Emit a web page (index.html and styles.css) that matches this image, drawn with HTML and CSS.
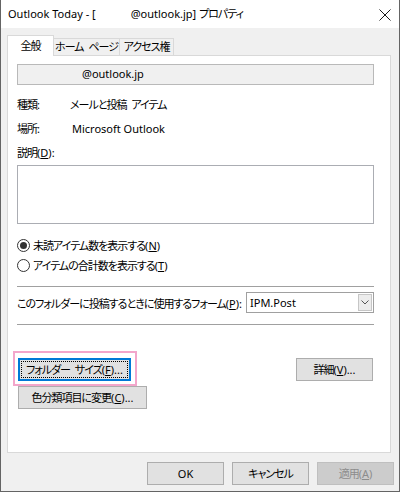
FILE: index.html
```html
<!DOCTYPE html>
<html lang="ja">
<head>
<meta charset="utf-8">
<title>Outlook Today プロパティ</title>
<link rel="stylesheet" href="styles.css">
</head>
<body>
<div class="window">
  <div class="titlebar">
    <span class="title">Outlook Today - [<span class="title-gap"></span>@outlook.jp] <span class="ja">プロパティ</span></span>
    <svg class="close" width="12" height="12" viewBox="0 0 12 12"><path d="M0.5 0.5 L11.5 11.5 M11.5 0.5 L0.5 11.5" stroke="#1a1a1a" stroke-width="1" fill="none"/></svg>
  </div>
  <div class="client">
    <div class="tabs">
      <div class="tab tab-general active"><span class="ja">全般</span></div>
      <div class="tab tab-home"><span class="ja">ホーム ページ</span></div>
      <div class="tab tab-access"><span class="ja">アクセス権</span></div>
    </div>
    <div class="panel">
      <div class="namebox">@outlook.jp</div>
      <div class="info-row"><span class="info-label ja">種類:</span><span class="ja">メールと投稿 アイテム</span></div>
      <div class="info-row"><span class="info-label ja">場所:</span><span class="info-value">Microsoft Outlook</span></div>
      <div class="info-row"><span class="ja">説明</span><span class="acc">(<u>D</u>):</span></div>
      <div class="textarea"></div>
      <div class="radio-row first"><span class="radio checked"></span><span><span class="ja">未読アイテム数を表示する</span><span class="acc">(<u>N</u>)</span></span></div>
      <div class="radio-row"><span class="radio"></span><span><span class="ja">アイテムの合計数を表示する</span><span class="acc">(<u>T</u>)</span></span></div>
      <div class="sep sep-top"></div>
      <div class="form-row">
        <span class="form-label"><span class="ja">このフォルダーに投稿するときに使用するフォーム</span><span class="acc">(<u>P</u>):</span></span>
        <div class="combo">
          <span class="combo-text">IPM.Post</span>
          <span class="combo-btn"><svg width="8" height="5" viewBox="0 0 8 5"><path d="M0.5 0.5 L4 4 L7.5 0.5" stroke="#555" stroke-width="1" fill="none"/></svg></span>
        </div>
      </div>
      <div class="sep sep-bottom"></div>
      <div class="btn-row">
        <div class="highlight-wrap">
          <button class="btn btn-default btn-size"><span class="focus"><span class="ja">フォルダー サイズ</span><span class="acc">(<u>F</u>)...</span></span></button>
        </div>
        <button class="btn btn-detail"><span class="ja">詳細</span><span class="acc">(<u>V</u>)...</span></button>
      </div>
      <button class="btn btn-category"><span class="ja">色分類項目に変更</span><span class="acc">(<u>C</u>)...</span></button>
    </div>
    <div class="footer">
      <button class="btn btn-footer">OK</button>
      <button class="btn btn-footer"><span class="ja">キャンセル</span></button>
      <button class="btn btn-footer disabled"><span class="ja">適用</span><span class="acc">(<u>A</u>)</span></button>
    </div>
  </div>
</div>
</body>
</html>
```

FILE: styles.css
```css
* { box-sizing: border-box; }

html, body {
  margin: 0;
  padding: 0;
  background: #ffffff;
}

body {
  font-family: "Segoe UI", "Noto Sans", "Noto Sans CJK JP", sans-serif;
  font-size: 11px;
  color: #000000;
  font-feature-settings: "palt";
}

.ja {
  letter-spacing: -1px;
  word-spacing: 3px;
}

.acc {
  letter-spacing: 0;
}

u { text-decoration: underline; text-underline-offset: 1px; }

.window {
  width: 400px;
  height: 492px;
  border: 1px solid #646464;
  border-top: none;
  background: #f0f0f0;
  display: flex;
  flex-direction: column;
}

.titlebar {
  height: 28px;
  background: #ffffff;
  display: flex;
  align-items: center;
  justify-content: space-between;
  padding: 0 8px 0 7px;
}

.title {
  line-height: 16px;
  white-space: nowrap;
}

.title-gap {
  display: inline-block;
  width: 35px;
}

.close {
  display: block;
  margin-top: 1px;
}

.client {
  padding: 7px 0 0 6px;
  display: flex;
  flex-direction: column;
}

.tabs {
  display: flex;
  align-items: flex-end;
  height: 20px;
  position: relative;
  z-index: 1;
}

.tab {
  height: 17px;
  border: 1px solid #d9d9d9;
  border-bottom: none;
  border-left: none;
  background: #f0f0f0;
  text-align: center;
  line-height: 16px;
  white-space: nowrap;
}

.tab.active {
  height: 21px;
  margin-bottom: -1px;
  background: #ffffff;
  border-left: 1px solid #d9d9d9;
  line-height: 20px;
  padding-bottom: 2px;
}

.tab-general { width: 47px; }
.tab-home { width: 66px; }
.tab-access { width: 54px; }

.panel {
  width: 384px;
  height: 398px;
  background: #ffffff;
  border: 1px solid #d9d9d9;
  padding: 8px 16px 0 9px;
  display: flex;
  flex-direction: column;
}

.namebox {
  height: 21px;
  background: #f0f0f0;
  border: 1px solid #b9b9b9;
  padding-left: 64px;
  line-height: 18px;
}

.info-row {
  height: 24px;
  line-height: 24px;
  display: flex;
  white-space: nowrap;
}

.namebox + .info-row { margin-top: 8px; }

.info-label {
  width: 53px;
}

.info-value {
  padding-left: 2px;
}

.textarea {
  height: 59px;
  border: 1px solid #abadb3;
  background: #ffffff;
}

.radio-row {
  height: 20px;
  display: flex;
  align-items: center;
  gap: 3px;
  white-space: nowrap;
}

.radio-row.first { margin-top: 11px; }

.radio {
  width: 13px;
  height: 13px;
  border: 1px solid #333333;
  border-radius: 50%;
  background: #ffffff;
  display: flex;
  align-items: center;
  justify-content: center;
  flex: none;
}

.radio.checked::before {
  content: "";
  width: 7px;
  height: 7px;
  border-radius: 50%;
  background: #333333;
}

.sep {
  height: 1px;
  background: #a0a0a0;
}

.sep-top { margin-top: 11px; }
.sep-bottom { margin-top: 11px; }

.form-row {
  margin-top: 5px;
  height: 21px;
  display: flex;
  align-items: center;
  justify-content: space-between;
}

.form-label {
  white-space: nowrap;
}

.combo {
  width: 128px;
  height: 21px;
  border: 1px solid #a0a0a0;
  background: #ffffff;
  position: relative;
  display: flex;
  align-items: center;
  padding-left: 3px;
}

.combo-btn {
  position: absolute;
  right: 1px;
  top: 1px;
  width: 14px;
  height: 17px;
  background: #ececec;
  border: 1px solid #c6c6c6;
  display: flex;
  align-items: center;
  justify-content: center;
}

.btn {
  font: inherit;
  color: #000000;
  background: #e1e1e1;
  border: 1px solid #adadad;
  height: 23px;
  padding: 0;
  margin: 0;
  white-space: nowrap;
  line-height: 20px;
}

.btn-row {
  margin-top: 33px;
  display: flex;
  justify-content: space-between;
  padding: 0 1px;
}

.highlight-wrap {
  position: relative;
}

.highlight-wrap::after {
  content: "";
  position: absolute;
  left: -5px;
  top: -7px;
  right: -6px;
  bottom: -5px;
  border: 2px solid #f3a6cb;
  pointer-events: none;
}

.btn-default {
  border-color: #0078d7;
  box-shadow: inset 0 0 0 1px #0078d7;
  width: 113px;
  padding: 2px;
}

.focus {
  display: block;
  height: 17px;
  line-height: 15px;
  border: 1px dotted #000000;
}

.btn-detail { width: 77px; }

.btn-category {
  margin: 5px 0 0 1px;
  width: 129px;
  align-self: flex-start;
}

.footer {
  margin-top: 9px;
  display: flex;
  justify-content: flex-end;
  gap: 8px;
  padding-right: 5px;
}

.btn-footer { width: 77px; }

.btn.disabled {
  background: #cccccc;
  border-color: #bfbfbf;
  color: #8c8c8c;
}
```
